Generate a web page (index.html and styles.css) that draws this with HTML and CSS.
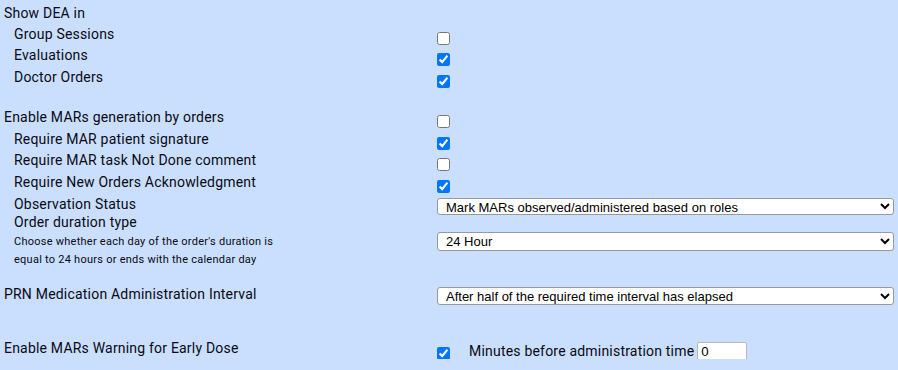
FILE: index.html
```html
<!DOCTYPE html>
<html lang="en">
<head>
    <meta charset="UTF-8">
    <meta name="viewport" content="width=device-width, initial-scale=1.0">
    <title>MAR Settings</title>
    <link rel="stylesheet" href="styles.css">
</head>
<body>

<div class="settings">
    <div class="row r-head">
        <div class="label">Show DEA in</div>
    </div>
    <div class="row r-check">
        <div class="label sub">Group Sessions</div>
        <div class="ctrl"><input type="checkbox" class="chk"></div>
    </div>
    <div class="row r-check h215">
        <div class="label sub">Evaluations</div>
        <div class="ctrl"><input type="checkbox" class="chk" checked></div>
    </div>
    <div class="row r-check">
        <div class="label sub">Doctor Orders</div>
        <div class="ctrl"><input type="checkbox" class="chk" checked></div>
    </div>

    <div class="row r-check h225 gap-top">
        <div class="label">Enable MARs generation by orders</div>
        <div class="ctrl"><input type="checkbox" class="chk"></div>
    </div>
    <div class="row r-check">
        <div class="label sub">Require MAR patient signature</div>
        <div class="ctrl"><input type="checkbox" class="chk" checked></div>
    </div>
    <div class="row r-check h22">
        <div class="label sub">Require MAR task Not Done comment</div>
        <div class="ctrl"><input type="checkbox" class="chk"></div>
    </div>
    <div class="row r-check h215">
        <div class="label sub">Require New Orders Acknowledgment</div>
        <div class="ctrl"><input type="checkbox" class="chk" checked></div>
    </div>
    <div class="row r-obs">
        <div class="label sub">Observation Status</div>
        <div class="ctrl">
            <select class="sel sel-obs">
                <option>Mark MARs observed/administered based on roles</option>
            </select>
        </div>
    </div>
    <div class="row r-duration">
        <div class="label sub">
            Order duration type
            <p class="hint">Choose whether each day of the order's duration is<br>equal to 24 hours or ends with the calendar day</p>
        </div>
        <div class="ctrl">
            <select class="sel sel-duration">
                <option>24 Hour</option>
            </select>
        </div>
    </div>

    <div class="row r-prn">
        <div class="label">PRN Medication Administration Interval</div>
        <div class="ctrl">
            <select class="sel sel-prn">
                <option>After half of the required time interval has elapsed</option>
            </select>
        </div>
    </div>

    <div class="row r-warn">
        <div class="label">Enable MARs Warning for Early Dose</div>
        <div class="ctrl warn">
            <input type="checkbox" class="chk" checked>
            <span class="minutes">Minutes before administration time</span>
            <input type="text" class="num" value="0">
        </div>
    </div>
</div>

</body>
</html>
```

FILE: styles.css
```css
* {
    margin: 0;
    padding: 0;
    box-sizing: border-box;
}

body {
    background-color: #c9dffd;
    font-family: Roboto, "Liberation Sans", Arial, sans-serif;
    font-size: 14px;
    letter-spacing: 0.2px;
    color: #0a0a14;
}

.settings {
    padding-top: 3px;
}

.row {
    display: grid;
    grid-template-columns: 437px 457px;
    align-items: start;
    height: 21px;
}

.label {
    padding-left: 4px;
    line-height: 21px;
    white-space: nowrap;
}

.label.sub {
    padding-left: 14px;
}

.chk {
    display: block;
    width: 13px;
    height: 13px;
    margin: 8px 0 0 0;
}

.h215 {
    height: 21.5px;
}

.h22 {
    height: 22px;
}

.h225 {
    height: 22.5px;
}

.gap-top {
    margin-top: 19px;
}

/* selects */
.sel {
    display: block;
    width: 457px;
    font-family: "Liberation Sans", Arial, sans-serif;
    font-size: 13px;
    letter-spacing: 0;
    color: #000;
    background-color: #fff;
    border: 1px solid #999;
    border-radius: 3px;
    padding: 0 2px 0 4px;
}

.r-obs {
    height: 18.3px;
}

.sel-obs {
    height: 17px;
    margin-top: 4.5px;
}

.r-duration {
    height: 58px;
}

.hint {
    font-size: 11px;
    letter-spacing: 0.25px;
    line-height: 18.5px;
}

.sel-duration {
    height: 19px;
    margin-top: 20px;
}

.r-prn {
    margin-top: 14px;
}

.sel-prn {
    height: 18px;
    margin-top: 3.3px;
}

.r-warn {
    margin-top: 33px;
}

.warn {
    display: flex;
    align-items: flex-start;
}

.warn .chk {
    margin-top: 9px;
}

.minutes {
    line-height: 21px;
    margin-top: 3.5px;
    margin-left: 19px;
    white-space: nowrap;
}

.num {
    width: 50px;
    height: 19.5px;
    margin-top: 4px;
    margin-left: 3px;
    padding: 1px 3px;
    font-family: "Liberation Sans", Arial, sans-serif;
    font-size: 13.33px;
    letter-spacing: 0;
    color: #000;
    border: 1px solid #b8b8b8;
    border-radius: 2px;
    background: #fff;
}
```
